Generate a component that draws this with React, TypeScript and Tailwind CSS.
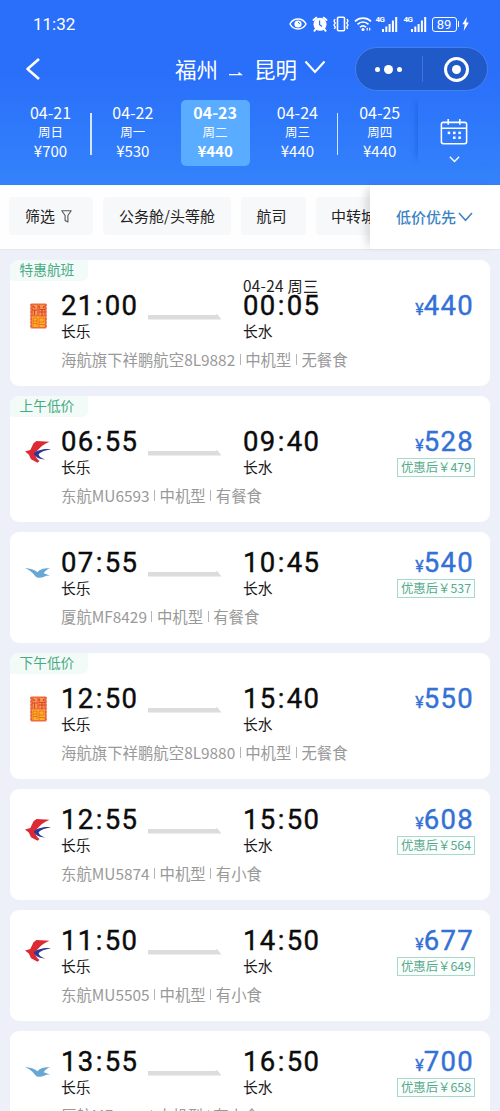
import { clsx } from "clsx";

type Airline = "lucky" | "eastern" | "xiamen";

interface Flight {
  tag?: string;
  airline: Airline;
  depart: string;
  arrive: string;
  arriveDate?: string;
  info: string[];
  price: number;
  discount?: number;
}

const dates = [
  { date: "04-21", day: "周日", price: 700 },
  { date: "04-22", day: "周一", price: 530 },
  { date: "04-23", day: "周二", price: 440 },
  { date: "04-24", day: "周三", price: 440 },
  { date: "04-25", day: "周四", price: 440 },
];

const flights: Flight[] = [
  {
    tag: "特惠航班",
    airline: "lucky",
    depart: "21:00",
    arrive: "00:05",
    arriveDate: "04-24 周三",
    info: ["海航旗下祥鹏航空8L9882", "中机型", "无餐食"],
    price: 440,
  },
  {
    tag: "上午低价",
    airline: "eastern",
    depart: "06:55",
    arrive: "09:40",
    info: ["东航MU6593", "中机型", "有餐食"],
    price: 528,
    discount: 479,
  },
  {
    airline: "xiamen",
    depart: "07:55",
    arrive: "10:45",
    info: ["厦航MF8429", "中机型", "有餐食"],
    price: 540,
    discount: 537,
  },
  {
    tag: "下午低价",
    airline: "lucky",
    depart: "12:50",
    arrive: "15:40",
    info: ["海航旗下祥鹏航空8L9880", "中机型", "无餐食"],
    price: 550,
  },
  {
    airline: "eastern",
    depart: "12:55",
    arrive: "15:50",
    info: ["东航MU5874", "中机型", "有小食"],
    price: 608,
    discount: 564,
  },
  {
    airline: "eastern",
    depart: "11:50",
    arrive: "14:50",
    info: ["东航MU5505", "中机型", "有小食"],
    price: 677,
    discount: 649,
  },
  {
    airline: "xiamen",
    depart: "13:55",
    arrive: "16:50",
    info: ["厦航MF8478", "中机型", "有小食"],
    price: 700,
    discount: 658,
  },
];

const Signal = () => (
  <div className="flex h-4 items-end">
    <span className="self-start font-['Roboto'] text-[8px] font-bold leading-[8px] tracking-[-0.5px]">
      4G
    </span>
    <svg className="-ml-0.5" width="16" height="16" viewBox="0 0 16 16" fill="currentColor">
      <rect x="0" y="13" width="2" height="3" />
      <rect x="3.3" y="10.5" width="2" height="5.5" />
      <rect x="6.6" y="8" width="2" height="8" />
      <rect x="9.9" y="4.5" width="2" height="11.5" />
      <rect x="13.2" y="1" width="2" height="15" />
    </svg>
  </div>
);

const StatusBar = () => (
  <div className="flex h-12 items-center pl-[33px] pr-[31px] text-white">
    <span className="flex-1 font-['Roboto'] text-[17px] leading-5">11:32</span>
    <div className="flex items-center">
      <svg width="18" height="14" viewBox="0 0 18 14" fill="none" stroke="currentColor" strokeWidth="1.5">
        <path d="M1 7C4.5 .4 13.5 .4 17 7C13.5 13.6 4.5 13.6 1 7Z" />
        <circle cx="9" cy="7" r="3.6" fill="currentColor" stroke="none" />
        <path d="M9 5.4a1.7 1.7 0 0 1 1.6 1.5" stroke="#2b70fa" strokeWidth="1" />
      </svg>
      <svg className="ml-[5px]" width="16" height="16" viewBox="0 0 16 16">
        <circle cx="8" cy="8.3" r="6.5" fill="currentColor" />
        <path
          d="M1.6 4L4.3 1.7M14.4 4L11.7 1.7M3.7 13L2.4 14.8M12.3 13L13.6 14.8"
          stroke="currentColor"
          strokeWidth="2"
          strokeLinecap="round"
        />
        <path d="M7.6 4.5V8.7L10 10.4" fill="none" stroke="#2b70fa" strokeWidth="1.2" />
      </svg>
      <svg className="ml-1" width="18" height="16" viewBox="0 0 18 16" fill="none" stroke="currentColor">
        <rect x="5.5" y="1.2" width="7" height="13.6" rx="1" strokeWidth="1.6" />
        <path d="M3 3L2 5L3.2 7L2 9L3.2 11L2.4 13M15 3L16 5L14.8 7L16 9L14.8 11L15.6 13" strokeWidth="1.4" />
      </svg>
      <svg className="ml-1" width="18" height="16" viewBox="0 0 18 16" fill="none" stroke="currentColor" strokeWidth="1.7">
        <path d="M1 5.3C5.3 1 12.7 1 17 5.3M3.5 8.3C6.6 5.2 11.4 5.2 14.5 8.3M6 11.2C7.8 9.5 10.2 9.5 12 11.2" />
        <circle cx="9" cy="13.6" r="1.5" fill="currentColor" stroke="none" />
        <path d="M13.2 11.8V14.6M15.7 11.8V14.6" strokeWidth="1.2" />
      </svg>
      <div className="ml-[3px]">
        <Signal />
      </div>
      <div className="ml-[5px]">
        <Signal />
      </div>
      <div className="ml-[5px] flex h-[15px] w-[25px] items-center justify-center rounded-[3px] border-[1.5px] border-white font-['Roboto'] text-[13px] leading-none">
        89
      </div>
      <span className="ml-px h-[6px] w-[1.5px] bg-white" />
      <svg className="ml-[3px]" width="7" height="14" viewBox="0 0 7 14" fill="currentColor">
        <path d="M4.8 0L.3 7.2H2.7L1.7 14L6.8 5.6H4.2Z" />
      </svg>
    </div>
  </div>
);

const TitleBar = () => (
  <div className="flex h-[42px] items-center text-white">
    <svg className="ml-[25px]" width="16" height="24" viewBox="0 0 16 24" fill="none" stroke="currentColor" strokeWidth="2.6">
      <path d="M14 2L2.5 12L14 22" strokeLinejoin="round" />
    </svg>
    <div className="ml-[134px] flex w-[180px] items-center text-[21.5px] leading-8">
      <span>福州</span>
      <svg className="ml-[11px] mr-[11px] mt-2" width="14" height="5" viewBox="0 0 14 5" fill="currentColor">
        <path d="M0 3H9.5V.8L14 4.3H0Z" />
      </svg>
      <span>昆明</span>
      <svg className="-mt-1 ml-[7px] shrink-0" width="22" height="14" viewBox="0 0 22 14" fill="none" stroke="currentColor" strokeWidth="2.1">
        <path d="M1.5 1.5L11 12L20.5 1.5" />
      </svg>
    </div>
    <div className="flex h-11 w-[133px] shrink-0 items-center rounded-full border border-[#4680ea] bg-[#2059c8]">
      <div className="flex w-[66px] items-center justify-center gap-[4px] pr-[2px]">
        <span className="size-[5px] rounded-full bg-white" />
        <span className="size-[9px] rounded-full bg-white" />
        <span className="size-[5px] rounded-full bg-white" />
      </div>
      <span className="h-[26px] w-px bg-[#3e74dc]" />
      <div className="ml-[21px] flex size-[25px] items-center justify-center rounded-full border-[3px] border-white">
        <span className="size-[9px] rounded-full bg-white" />
      </div>
    </div>
  </div>
);

const DateBar = () => (
  <div className="mt-[7px] flex h-[70px] text-white">
    <div className="flex w-[418px] pl-[9px]">
      {dates.map((item, i) => {
        const active = item.date === "04-23";
        return (
          <div key={item.date} className="flex w-[82.3px] shrink-0 items-center">
            <div
              className={clsx(
                "mt-0.5 ml-[7px] flex h-[66px] w-[69px] shrink-0 flex-col items-center rounded-[5px] pt-[3px] text-[16px] leading-[19px]",
                active && "bg-[#59acff] font-bold"
              )}
            >
              <span>{item.date}</span>
              <span className="text-[12.5px] font-normal">{item.day}</span>
              <span className="text-[15px]">¥{item.price}</span>
            </div>
            {(i === 0 || i === 3) && (
              <span className="ml-[5px] mt-1 h-[42px] w-[1.5px] shrink-0 bg-[#d3e6ff]" />
            )}
          </div>
        );
      })}
    </div>
    <div className="flex h-[66px] w-[82px] flex-col items-center pr-[10px] pt-[22px] shadow-[-6px_0_6px_-5px_rgba(20,70,190,0.45)]">
      <svg width="28" height="27" viewBox="0 0 28 27" fill="none" stroke="currentColor" strokeWidth="1.6">
        <rect x="1" y="3.5" width="26" height="22" rx="2" />
        <path d="M1 9.5H27M8 0V6M20 0V6" />
        <g fill="currentColor" stroke="none">
          <rect x="7.5" y="13" width="2.6" height="2.6" />
          <rect x="13" y="13" width="2.6" height="2.6" />
          <rect x="18.5" y="13" width="2.6" height="2.6" />
          <rect x="13" y="18" width="2.6" height="2.6" />
          <rect x="18.5" y="18" width="2.6" height="2.6" />
        </g>
      </svg>
      <svg className="mt-[11px]" width="11" height="7" viewBox="0 0 11 7" fill="none" stroke="currentColor" strokeWidth="1.4">
        <path d="M.7 .8L5.5 5.6L10.3 .8" />
      </svg>
    </div>
  </div>
);

const Filters = () => (
  <div className="flex h-[65px] border-b border-[#e4e6eb] bg-[#fefefe] text-[15px] text-[#222]">
    <div className="flex w-[370px] gap-[10px] overflow-hidden whitespace-nowrap pl-[9px] pt-[12px]">
      <div className="flex h-[38px] w-[84px] shrink-0 items-center rounded bg-[#f7f8fa] pl-4">
        筛选
        <svg className="ml-[6px]" width="11" height="13" viewBox="0 0 11 13" fill="none" stroke="#555" strokeWidth="1.1">
          <path d="M.8 .7H10.2L6.9 5.5V12L4.1 10.4V5.5Z" strokeLinejoin="round" />
        </svg>
      </div>
      <div className="flex h-[38px] w-[128px] shrink-0 items-center justify-center rounded bg-[#f7f8fa]">
        公务舱/头等舱
      </div>
      <div className="flex h-[38px] w-[65px] shrink-0 items-center justify-center rounded bg-[#f7f8fa] pr-1">
        航司
      </div>
      <div className="flex h-[38px] w-[100px] shrink-0 items-center rounded bg-[#f7f8fa] pl-[15px]">
        中转城市
      </div>
    </div>
    <div className="flex flex-1 items-center bg-white pl-[26px] font-medium text-[#3c83c4] shadow-[-7px_0_8px_-3px_rgba(0,0,0,0.13)]">
      低价优先
      <svg className="ml-[2px]" width="15" height="10" viewBox="0 0 15 10" fill="none" stroke="currentColor" strokeWidth="1.5">
        <path d="M1 1L7.5 8.3L14 1" />
      </svg>
    </div>
  </div>
);

const AirlineLogo = ({ airline }: { airline: Airline }) => {
  if (airline === "lucky") {
    return (
      <svg width="17" height="26" viewBox="0 0 17 26">
        <rect x=".5" y=".5" width="16" height="25" rx="1" fill="#ee6a3c" />
        <path d="M3 2H7V12H3ZM9.5 2H14V12H9.5Z" fill="#f59a4a" />
        <path
          d="M3 3L5 5M2 7H7M4.5 7V12M9 3L10 5M14 3L13 5M9 6.5H15M9 9H15M12 6V13"
          stroke="#d8402f"
          strokeWidth="1.1"
        />
        <path d="M2 13.5H15V24H2Z" fill="#fcb223" />
        <path
          d="M3 24V15H7V23M3 18H7M3 20.5H7M9 24V15H14V19H9M9 21.5H15V24"
          fill="none"
          stroke="#e8622a"
          strokeWidth=".8"
        />
        <path d="M.8 1V25M16.2 1V25" stroke="#d95a48" strokeWidth=".8" strokeDasharray="2 1.5" />
      </svg>
    );
  }
  if (airline === "eastern") {
    return (
      <svg width="26" height="22" viewBox="0 0 26 22">
        <path d="M24.5 .8L11.5 0L8.5 2.2L5.3 9L0 10.4L3.8 13.5L6 18.3L12.5 21.8L14.5 20C12 18.3 10.2 15.8 10.2 12.3C12.5 9.6 15.5 4.5 24.5 .8Z" fill="#dc2a35" />
        <path d="M26 8.2C18.5 7.6 12 9.2 8.8 12.6C10 16 14 18.4 20.5 18.6C16.3 16.8 13.6 15.3 13.6 13.4C15.3 10.9 20 9.4 26 8.2Z" fill="#2d3794" />
      </svg>
    );
  }
  return (
    <svg width="26" height="12" viewBox="0 0 26 12">
      <path d="M0 1C5 1.4 9.5 2.3 12.6 5.3C14.2 2.5 18.5 1 25 1.2C21.8 2.3 19.7 4.2 18.8 6.3L25 8.5C20 8.1 18 11.2 13.5 10.8C9.5 10.5 8.8 4.5 0 1Z" fill="#68a7d3" />
    </svg>
  );
};

const Time = ({ value }: { value: string }) => {
  const [hour, minute] = value.split(":");
  return (
    <div className="flex h-7 font-['Roboto'] text-[27.5px] leading-7 tracking-[1.4px] text-[#0c0c0c] [-webkit-text-stroke:0.4px_#0c0c0c]">
      <span>{hour}</span>
      <span className="w-[10px] pl-px">:</span>
      <span>{minute}</span>
    </div>
  );
};

const FlightCard = ({ flight }: { flight: Flight }) => (
  <div
    className={clsx(
      "shrink-0 overflow-hidden rounded-[9px] bg-white",
      flight.tag ? "h-[126px]" : "h-[111px] pt-[6px]"
    )}
  >
    {flight.tag && (
      <div className="flex h-[21px] w-[78px] items-center rounded-br-[6px] bg-[#f3fbf8] pb-[2px] pl-[9.5px] text-[13.7px] text-[#47aa85]">
        {flight.tag}
      </div>
    )}
    <div className="flex">
      <div className="flex h-[70px] w-[51px] items-center justify-center pl-[5px]">
        <AirlineLogo airline={flight.airline} />
      </div>
      <div className="flex-1">
        <div className="flex pr-4">
          <div className="w-[87px] pt-[11px]">
            <Time value={flight.depart} />
            <div className="text-[14.8px] leading-[22px] text-[#1a1a1a]">长乐</div>
          </div>
          <svg className="mt-[33px]" width="74" height="6" viewBox="0 0 74 6" fill="#dcdcdc">
            <path d="M0 1H67L69 0L73.5 5.5H0Z" />
          </svg>
          <div className="ml-[21px] flex-1">
            <div className="-mt-[5px] h-4 whitespace-nowrap text-[15.3px] leading-[18px] tracking-[0.3px] text-[#222]">
              {flight.arriveDate}
            </div>
            <Time value={flight.arrive} />
            <div className="text-[14.8px] leading-[22px] text-[#1a1a1a]">长水</div>
          </div>
          <div className="flex flex-col items-end pt-[11px]">
            <div className="flex h-7 items-baseline font-['Roboto'] leading-7 text-[#3471d5] [-webkit-text-stroke:0.4px_#3471d5]">
              <span className="text-[16px]">¥</span>
              <span className="text-[27.5px] tracking-[1.3px]">{flight.price}</span>
            </div>
            {flight.discount && (
              <div className="-mr-px mt-[2px] flex h-[19px] w-[78px] items-center justify-center whitespace-nowrap border border-[#a9d9c8] bg-[#fafffd] text-[12.4px] text-[#57a98b]">
                优惠后￥{flight.discount}
              </div>
            )}
          </div>
        </div>
        <div className="mt-[5px] flex items-center text-[15.4px] leading-6 text-[#999]">
          {flight.info.map((text, i) => (
            <div key={text} className="flex items-center">
              {i > 0 && <span className="mx-[4.5px] h-[11px] w-px bg-[#b5b5b5]" />}
              <span>{text}</span>
            </div>
          ))}
        </div>
      </div>
    </div>
  </div>
);

const App = () => {
  return (
    <div className="h-[1111px] w-[500px] overflow-hidden bg-[#edf0f9] font-['Noto_Sans_CJK_SC',sans-serif]">
      <header className="h-[185px] bg-gradient-to-b from-[#2a6ffa] from-40% to-[#3482fb]">
        <StatusBar />
        <TitleBar />
        <DateBar />
      </header>
      <Filters />
      <main className="flex flex-col gap-[10px] px-[10px] pt-[10px]">
        {flights.map((flight) => (
          <FlightCard key={flight.depart} flight={flight} />
        ))}
      </main>
    </div>
  );
};

export default App;
